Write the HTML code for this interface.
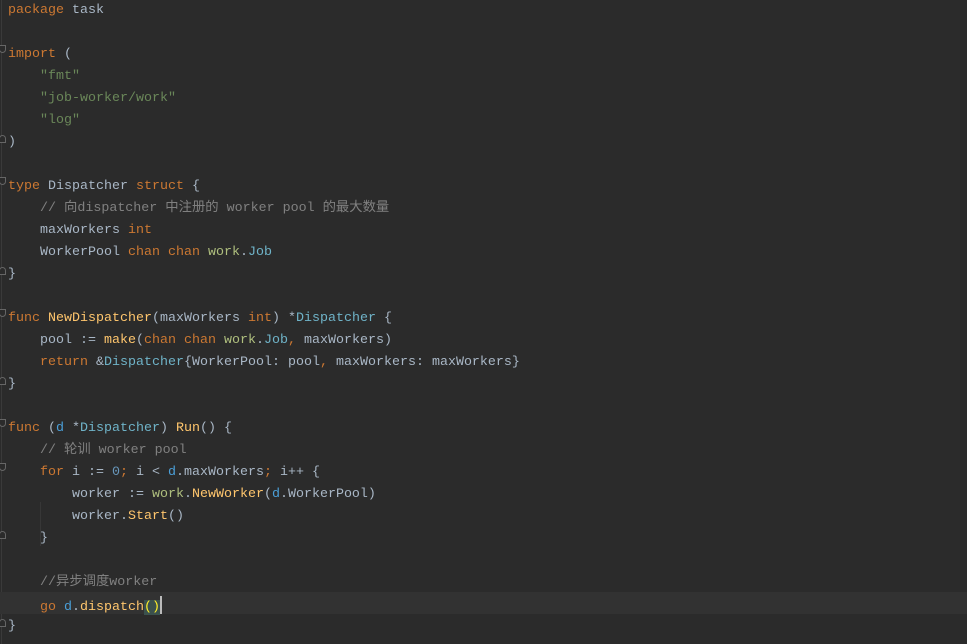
<!DOCTYPE html>
<html><head><meta charset="utf-8"><style>
html,body{margin:0;padding:0;background:#2b2b2b;width:967px;height:644px;overflow:hidden}
.ed{position:absolute;left:0;top:-2px;width:967px;font-family:"Liberation Mono","Noto Sans CJK SC",monospace;font-size:13.33px;color:#a9b7c6}
.l{height:18px;line-height:18px;padding-top:4px;padding-left:8px;position:relative;white-space:pre}
.cur{background:#323232}
.k{color:#cc7832}.c{color:#808080}.s{color:#6a8759}.p{color:#afbf7e}.t{color:#6fb3c8}.f{color:#ffc66d}.n{color:#6897bb}.r{color:#4a9fd8}
.gut{position:absolute;left:1px;top:0;width:1px;height:644px;background:#3a3a3a}
.fold{position:absolute;left:-1px;width:7px;height:8px;border:1px solid #666;border-radius:0 0 4px 4px;box-sizing:border-box;background:#2b2b2b}
.foldu{border-radius:4px 4px 0 0}
.ig{position:absolute;width:1px;background:#373737}
.br{background:#3b514d;color:#ffef28}
.caret{display:inline-block;width:2px;height:18px;background:#bbb;vertical-align:-4px}
</style></head><body>
<div class="gut"></div>
<div class="ig" style="left:40px;top:502px;height:44px"></div>
<div class="ed"><div class="l"><span class="k">package</span> task</div><div class="l"> </div><div class="l"><span class="k">import</span> (</div><div class="l">    <span class="s">"fmt"</span></div><div class="l">    <span class="s">"job-worker/work"</span></div><div class="l">    <span class="s">"log"</span></div><div class="l">)</div><div class="l"> </div><div class="l"><span class="k">type</span> Dispatcher <span class="k">struct</span> {</div><div class="l">    <span class="c">// 向dispatcher 中注册的 worker pool 的最大数量</span></div><div class="l">    maxWorkers <span class="k">int</span></div><div class="l">    WorkerPool <span class="k">chan chan</span> <span class="p">work</span>.<span class="t">Job</span></div><div class="l">}</div><div class="l"> </div><div class="l"><span class="k">func</span> <span class="f">NewDispatcher</span>(maxWorkers <span class="k">int</span>) *<span class="t">Dispatcher</span> {</div><div class="l">    pool := <span class="f">make</span>(<span class="k">chan chan</span> <span class="p">work</span>.<span class="t">Job</span><span class="k">,</span> maxWorkers)</div><div class="l">    <span class="k">return</span> &amp;<span class="t">Dispatcher</span>{WorkerPool: pool<span class="k">,</span> maxWorkers: maxWorkers}</div><div class="l">}</div><div class="l"> </div><div class="l"><span class="k">func</span> (<span class="r">d</span> *<span class="t">Dispatcher</span>) <span class="f">Run</span>() {</div><div class="l">    <span class="c">// 轮训 worker pool</span></div><div class="l">    <span class="k">for</span> i := <span class="n">0</span><span class="k">;</span> i &lt; <span class="r">d</span>.maxWorkers<span class="k">;</span> i++ {</div><div class="l">        worker := <span class="p">work</span>.<span class="f">NewWorker</span>(<span class="r">d</span>.WorkerPool)</div><div class="l">        worker.<span class="f">Start</span>()</div><div class="l">    }</div><div class="l"> </div><div class="l">    <span class="c">//异步调度worker</span></div><div class="l cur">    <span class="k">go</span> <span class="r">d</span>.<span class="f">dispatch</span><span class="br">()</span><span class="caret"></span></div><div class="l">}</div></div>
<div class="fold" style="top:45px"></div>
<div class="fold foldu" style="top:135px"></div>
<div class="fold" style="top:177px"></div>
<div class="fold foldu" style="top:267px"></div>
<div class="fold" style="top:309px"></div>
<div class="fold foldu" style="top:377px"></div>
<div class="fold" style="top:419px"></div>
<div class="fold" style="top:463px"></div>
<div class="fold foldu" style="top:531px"></div>
<div class="fold foldu" style="top:619px"></div>
</body></html>
